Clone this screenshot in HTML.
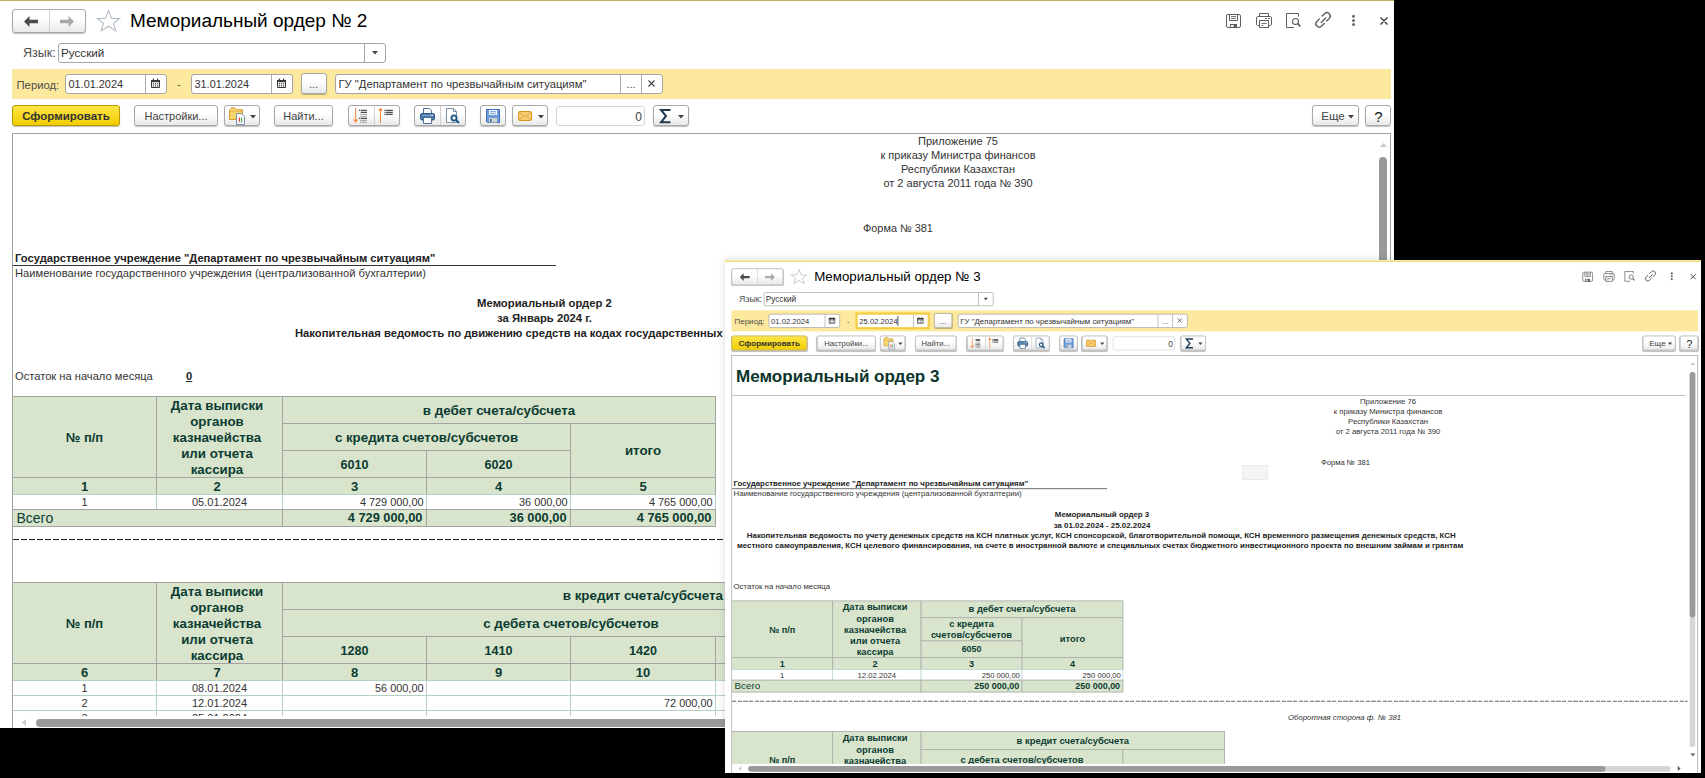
<!DOCTYPE html><html><head><meta charset="utf-8"><style>
*{margin:0;padding:0;box-sizing:border-box}
html,body{width:1705px;height:778px;overflow:hidden;background:#000}
body{position:relative;font-family:"Liberation Sans", sans-serif}
.win{position:absolute;width:1394px;height:728px;background:#fff;overflow:hidden}
.b,.t,.btn,.inp{position:absolute}
.t{line-height:0;white-space:nowrap}
.btn{border:1px solid #a8a8a8;border-radius:3px;background:linear-gradient(#fff 40%,#e9e9e9);box-shadow:0 1px 1px rgba(0,0,0,.25)}
.ybtn{border-color:#b89a00;background:linear-gradient(#fde648,#f2cd00)}
.inp{border:1px solid #a5a5a5;border-radius:3px;background:#fff}
svg.b{overflow:visible}
</style></head><body>
<div class="win" style="left:0;top:0">
<div class="b" style="left:0px;top:0px;width:1394px;height:1px;background:#c2b25a"></div>
<div class="btn" style="left:12px;top:9px;width:74px;height:24px;"></div>
<div class="b" style="left:49px;top:10px;width:1px;height:22px;background:#d0d0d0"></div>
<svg class="b" style="left:24px;top:16px" width="14" height="11" viewBox="0 0 14 11"><path d="M0 5.5L5.5 0V3.8H14V7.2H5.5V11Z" fill="#4a4a4a"/></svg>
<svg class="b" style="left:60px;top:16px" width="14" height="11" viewBox="0 0 14 11"><path d="M14 5.5L8.5 0V3.8H0V7.2H8.5V11Z" fill="#a9a9a9"/></svg>
<svg class="b" style="left:90px;top:5px" width="35" height="32" viewBox="0 0 35 32"><path d="M18.5 5.6L21.7 13.4H29.7L23.5 18.4L25.8 25.9L18.5 21.2L11.2 25.9L13.5 18.4L7.3 13.4H15.3Z" fill="none" stroke="#b2bac4" stroke-width="1.05" stroke-linejoin="miter"/></svg>
<div class="t" style="left:130px;top:21.42px;font-size:19px;color:#000;">Мемориальный ордер № 2</div>
<svg class="b" style="left:1222px;top:9px" width="84" height="24" viewBox="0 0 84 24"><g fill="none" stroke="#5f5f5f" stroke-width="1"><rect x="4.5" y="5.5" width="14" height="13" rx="1.5"/><path d="M7.5 5.5V11.5H15.5V5.5"/><path d="M9 7.5H14M9 9.5H14" stroke-width="0.9"/><rect x="8.5" y="15.5" width="6" height="3"/><path d="M37.5 7.5V4.5H46.5V7.5"/><path d="M37.5 16.5H35.5A1.5 1.5 0 0 1 34.5 15V9A1.5 1.5 0 0 1 35.5 7.5H48.5A1.5 1.5 0 0 1 49.5 9V15A1.5 1.5 0 0 1 48.5 16.5H46.5"/><rect x="37.5" y="11.5" width="9" height="7"/><path d="M39.5 14.5H44.5M39.5 16.5H41.5M43 9.5H45M46 9.5H48" stroke-width="0.9"/><path d="M72 18.5H64.5V4.5H76.5V7.5"/><circle cx="73.5" cy="12.5" r="3" stroke-width="1.1"/><path d="M75.7 14.7L78.3 17.3" stroke-width="1.7"/></g><rect x="11.5" y="15.5" width="3" height="3" fill="#5f5f5f"/></svg>
<svg class="b" style="left:1312px;top:9px" width="24" height="24" viewBox="0 0 24 24"><path d="M7.3 10L4.9 12.4A3.3 3.3 0 0 0 9.6 17.1L12.3 14.4M10.2 7.1L12.6 4.7A3.3 3.3 0 0 1 17.3 9.4L14.6 12.1M9.2 13.6L13.7 9.1" fill="none" stroke="#5f5f5f" stroke-width="1.4" stroke-linecap="round"/></svg>
<svg class="b" style="left:1350px;top:13px" width="7" height="14" viewBox="0 0 7 14"><circle cx="3.5" cy="3.3" r="1.5" fill="#6a6a6a"/><circle cx="3.5" cy="7.4" r="1.5" fill="#6a6a6a"/><circle cx="3.5" cy="11.5" r="1.5" fill="#6a6a6a"/></svg>
<svg class="b" style="left:1379.5px;top:16.5px" width="8" height="8" viewBox="0 0 8 8"><path d="M0.8 0.8L7.2 7.2M7.2 0.8L0.8 7.2" stroke="#333" stroke-width="1.25" stroke-linecap="round"/></svg>
<div class="t" style="left:23px;top:52.67px;font-size:12.5px;color:#4d4d4d;">Язык:</div>
<div class="inp" style="left:58px;top:43px;width:328px;height:20px;"></div>
<div class="b" style="left:364px;top:44px;width:1px;height:18px;background:#a5a5a5"></div>
<svg class="b" style="left:371.5px;top:51.0px" width="6" height="3.5" viewBox="0 0 6 3.5"><path d="M0 0H6L3 3.5Z" fill="#444"/></svg>
<div class="t" style="left:61px;top:52.95px;font-size:11.7px;color:#333;">Русский</div>
<div class="b" style="left:12px;top:69px;width:1379px;height:30px;background:#fce99d"></div>
<div class="t" style="left:16.5px;top:85.08px;font-size:11.3px;color:#4d4d4d;">Период:</div>
<div class="inp" style="left:65px;top:74px;width:102px;height:20px;"></div>
<div class="b" style="left:145px;top:75px;width:1px;height:18px;background:#a8a8a8"></div>
<svg class="b" style="left:151px;top:78px" width="9" height="10" viewBox="0 0 9 10"><path d="M0.5 2.5H8.5V9.5H0.5Z" fill="none" stroke="#3a3a3a"/><rect x="0" y="2" width="9" height="2.2" fill="#3a3a3a"/><rect x="1.8" y="0.6" width="1.2" height="2" fill="#3a3a3a"/><rect x="6" y="0.6" width="1.2" height="2" fill="#3a3a3a"/><g fill="#3a3a3a"><rect x="1.8" y="5.2" width="1.2" height="1.2"/><rect x="3.9" y="5.2" width="1.2" height="1.2"/><rect x="6" y="5.2" width="1.2" height="1.2"/><rect x="1.8" y="7.3" width="1.2" height="1.2"/><rect x="3.9" y="7.3" width="1.2" height="1.2"/><rect x="6" y="7.3" width="1.2" height="1.2"/></g></svg>
<div class="t" style="left:68.5px;top:84.22px;font-size:10.9px;color:#333;">01.01.2024</div>
<div class="t" style="left:177px;top:83.69px;font-size:11px;color:#555;">-</div>
<div class="inp" style="left:191px;top:74px;width:102px;height:20px;"></div>
<div class="b" style="left:271px;top:75px;width:1px;height:18px;background:#a8a8a8"></div>
<svg class="b" style="left:277px;top:78px" width="9" height="10" viewBox="0 0 9 10"><path d="M0.5 2.5H8.5V9.5H0.5Z" fill="none" stroke="#3a3a3a"/><rect x="0" y="2" width="9" height="2.2" fill="#3a3a3a"/><rect x="1.8" y="0.6" width="1.2" height="2" fill="#3a3a3a"/><rect x="6" y="0.6" width="1.2" height="2" fill="#3a3a3a"/><g fill="#3a3a3a"><rect x="1.8" y="5.2" width="1.2" height="1.2"/><rect x="3.9" y="5.2" width="1.2" height="1.2"/><rect x="6" y="5.2" width="1.2" height="1.2"/><rect x="1.8" y="7.3" width="1.2" height="1.2"/><rect x="3.9" y="7.3" width="1.2" height="1.2"/><rect x="6" y="7.3" width="1.2" height="1.2"/></g></svg>
<div class="t" style="left:194.5px;top:84.22px;font-size:10.9px;color:#333;">31.01.2024</div>
<div class="btn" style="left:301px;top:73px;width:26px;height:21px;"><div class="t" style="left:0px;top:10.19px;font-size:11px;color:#444;left:7px">...</div>
</div>
<div class="inp" style="left:335px;top:74px;width:328px;height:20px;"></div>
<div class="b" style="left:620px;top:75px;width:1px;height:18px;background:#a8a8a8"></div>
<div class="b" style="left:641px;top:75px;width:1px;height:18px;background:#a8a8a8"></div>
<div class="t" style="left:338.5px;top:84.11px;font-size:11.24px;color:#333;">ГУ "Департамент по чрезвычайным ситуациям"</div>
<div class="t" style="left:-369px;width:2000px;text-align:center;top:83.69px;font-size:11px;color:#444;">...</div>
<svg class="b" style="left:648px;top:80px" width="7" height="7" viewBox="0 0 7 7"><path d="M0.5 0.5L6.5 6.5M6.5 0.5L0.5 6.5" stroke="#444" stroke-width="1.1"/></svg>
<div class="btn ybtn" style="left:12px;top:105px;width:108px;height:21px;"></div>
<div class="t" style="left:-934px;width:2000px;text-align:center;top:116.02px;font-size:11.5px;font-weight:bold;color:#333;">Сформировать</div>
<div class="btn" style="left:134px;top:105px;width:84px;height:21px;"></div>
<div class="t" style="left:-824px;width:2000px;text-align:center;top:116.19px;font-size:11px;color:#444;">Настройки...</div>
<div class="btn" style="left:224px;top:105px;width:36px;height:21px;"></div>
<svg class="b" style="left:229px;top:107px" width="17" height="18" viewBox="0 0 17 18"><path d="M0.5 3L2.8 0.8H5.6L7.3 2.7H13.5V12.5H0.5Z" fill="#f7d66e" stroke="#d39a35"/><path d="M0.5 4.5H13.5" stroke="#e6b04a" stroke-width="0.8"/><path d="M7.5 6.5H12.5L15.5 9.5V17.5H7.5Z" fill="#fff" stroke="#7890a5"/><rect x="9.8" y="10.5" width="1.2" height="4" fill="#e83a3a"/><rect x="12" y="10.5" width="1.2" height="4" fill="#3cb44a"/><path d="M9 15H14" stroke="#8a8a8a" stroke-width="0.6"/></svg>
<svg class="b" style="left:249.5px;top:114.5px" width="6" height="3.5" viewBox="0 0 6 3.5"><path d="M0 0H6L3 3.5Z" fill="#444"/></svg>
<div class="btn" style="left:274px;top:105px;width:59px;height:21px;"></div>
<div class="t" style="left:-696.5px;width:2000px;text-align:center;top:116.19px;font-size:11px;color:#444;">Найти...</div>
<div class="btn" style="left:348px;top:105px;width:52px;height:21px;"></div>
<div class="b" style="left:374px;top:106px;width:1px;height:19px;background:#d0d0d0"></div>
<svg class="b" style="left:353px;top:107px" width="16" height="17" viewBox="0 0 16 17"><path d="M2.6 1V15" stroke="#f28a4a" stroke-width="1.1"/><path d="M0 12.5L2.6 16L5.2 12.5Z" fill="#f28a4a"/><g fill="#222"><rect x="6" y="2.8" width="1" height="1"/><rect x="7.6" y="2.8" width="6.4" height="1"/><rect x="7.6" y="4.8" width="6.4" height="1"/><rect x="6" y="10.8" width="1" height="1"/><rect x="7.6" y="10.8" width="6.4" height="1"/></g><g fill="#9a9a9a"><rect x="7" y="6.8" width="1" height="1"/><rect x="8.4" y="6.8" width="5.6" height="1"/><rect x="7" y="8.8" width="1" height="1"/><rect x="8.4" y="8.8" width="5.6" height="1"/><rect x="7" y="12.8" width="1" height="1"/><rect x="8.4" y="12.8" width="5.6" height="1"/><rect x="7" y="14.8" width="1" height="1"/><rect x="8.4" y="14.8" width="5.6" height="1"/></g></svg>
<svg class="b" style="left:378px;top:107px" width="16" height="17" viewBox="0 0 16 17"><path d="M2.5 3V16" stroke="#f28a4a" stroke-width="1.1"/><path d="M0 3.8L2.5 0.5L5 3.8Z" fill="#f28a4a"/><g fill="#222"><rect x="6.3" y="2.8" width="1" height="1"/><rect x="7.8" y="2.8" width="7" height="1"/><rect x="6.3" y="4.8" width="1" height="1"/><rect x="7.8" y="4.8" width="7" height="1"/><rect x="6.3" y="6.8" width="1" height="1"/><rect x="7.8" y="6.8" width="7" height="1"/></g></svg>
<div class="btn" style="left:414px;top:105px;width:52px;height:21px;"></div>
<div class="b" style="left:440px;top:106px;width:1px;height:19px;background:#d0d0d0"></div>
<svg class="b" style="left:420px;top:108px" width="15" height="16" viewBox="0 0 15 16"><path d="M3.5 6V0.5H9.5L11.5 2.5V6" fill="#fff" stroke="#4d6f92"/><rect x="0.5" y="5.5" width="14" height="6.5" rx="1.5" fill="#4a78a6" stroke="#2d5a86"/><path d="M2 7.5H13" stroke="#8fb0d0" stroke-width="0.8"/><rect x="10.5" y="6.6" width="1" height="1" fill="#fff"/><rect x="12" y="6.6" width="1" height="1" fill="#fff"/><path d="M3.5 9.5H11.5V15.5H3.5Z" fill="#fff" stroke="#4d6f92"/></svg>
<svg class="b" style="left:446px;top:108px" width="15" height="16" viewBox="0 0 15 16"><path d="M0.5 0.5H7.5L10.5 3.5V14.5H0.5Z" fill="#fff" stroke="#7890a8"/><path d="M7.5 0.5V3.5H10.5" fill="none" stroke="#7890a8"/><circle cx="8" cy="10" r="2.6" fill="none" stroke="#1d5480" stroke-width="1.8"/><path d="M9.8 11.8L13 15" stroke="#1d5480" stroke-width="2"/></svg>
<div class="btn" style="left:480px;top:105px;width:26px;height:21px;"></div>
<svg class="b" style="left:486px;top:109px" width="14" height="14" viewBox="0 0 14 14"><path d="M0.5 0.5H13.5V13.5H1.5L0.5 12.5Z" fill="#6d9ddb" stroke="#3f6fb0"/><rect x="3" y="1" width="8" height="4.8" fill="#fff"/><path d="M4 2.6H10M4 4.3H10" stroke="#5a88c8" stroke-width="0.8"/><rect x="3" y="9" width="8" height="4.5" fill="#cfd6d0"/><rect x="4" y="10" width="1.6" height="3" fill="#3f6fb0"/></svg>
<div class="btn" style="left:512px;top:105px;width:36px;height:21px;"></div>
<svg class="b" style="left:518px;top:111px" width="14" height="10" viewBox="0 0 14 10"><rect x="0.5" y="0.5" width="13" height="9" rx="1" fill="#f8cd70" stroke="#d8921e"/><path d="M1 1L7 6L13 1M1 9L5.3 4.8M13 9L8.7 4.8" fill="none" stroke="#dc9a36" stroke-width="0.8"/></svg>
<svg class="b" style="left:537.5px;top:114.5px" width="6" height="3.5" viewBox="0 0 6 3.5"><path d="M0 0H6L3 3.5Z" fill="#444"/></svg>
<div class="inp" style="left:556px;top:106px;width:89px;height:20px;border-color:#d5d5d5"></div>
<div class="t" style="left:-1358px;width:2000px;text-align:right;top:116.84px;font-size:12px;color:#444;">0</div>
<div class="btn" style="left:653px;top:105px;width:36px;height:21px;"></div>
<svg class="b" style="left:659px;top:108px" width="13" height="16" viewBox="0 0 13 16"><path d="M11.5 1.9H2L7 8.1L2 14.3H11.5" fill="none" stroke="#1f3a50" stroke-width="2" stroke-linejoin="miter"/></svg>
<svg class="b" style="left:677.5px;top:114.5px" width="6" height="3.5" viewBox="0 0 6 3.5"><path d="M0 0H6L3 3.5Z" fill="#444"/></svg>
<div class="btn" style="left:1312px;top:105px;width:47px;height:21px;"></div>
<div class="t" style="left:333px;width:2000px;text-align:center;top:116.02px;font-size:11.5px;color:#444;">Еще</div>
<svg class="b" style="left:1347.5px;top:114.5px" width="6" height="3.5" viewBox="0 0 6 3.5"><path d="M0 0H6L3 3.5Z" fill="#444"/></svg>
<div class="btn" style="left:1365px;top:105px;width:26px;height:21px;"></div>
<div class="t" style="left:378.5px;width:2000px;text-align:center;top:116.80px;font-size:15px;color:#111;">?</div>
<div class="b" style="left:12px;top:133px;width:1379px;height:600px;border:1px solid #a0a0a0;background:#fff"></div>
<div class="b" style="left:13px;top:134px;width:1377px;height:582px;overflow:hidden"><div class="b" style="left:-13px;top:-134px;width:1394px;height:728px"><div class="t" style="left:-42px;width:2000px;text-align:center;top:141.19px;font-size:11px;color:#333;">Приложение 75</div>
<div class="t" style="left:-42px;width:2000px;text-align:center;top:155.19px;font-size:11px;color:#333;">к приказу Министра финансов</div>
<div class="t" style="left:-42px;width:2000px;text-align:center;top:169.19px;font-size:11px;color:#333;">Республики Казахстан</div>
<div class="t" style="left:-42px;width:2000px;text-align:center;top:183.19px;font-size:11px;color:#333;">от 2 августа 2011 года № 390</div>
<div class="t" style="left:863px;top:227.72px;font-size:10.9px;color:#333;">Форма № 381</div>
<div class="t" style="left:15px;top:258.12px;font-size:11.2px;font-weight:bold;color:#222;">Государственное учреждение "Департамент по чрезвычайным ситуациям"</div>
<div class="b" style="left:12px;top:265px;width:544px;height:1px;background:#333"></div>
<div class="t" style="left:15px;top:273.13px;font-size:11.16px;color:#333;">Наименование государственного учреждения (централизованной бухгалтерии)</div>
<div class="t" style="left:-455.5px;width:2000px;text-align:center;top:302.58px;font-size:11.3px;font-weight:bold;color:#222;">Мемориальный ордер 2</div>
<div class="t" style="left:-455.5px;width:2000px;text-align:center;top:317.58px;font-size:11.3px;font-weight:bold;color:#222;">за Январь 2024 г.</div>
<div class="t" style="left:295px;top:332.61px;font-size:11.24px;font-weight:bold;color:#222;">Накопительная ведомость по движению средств на кодах государственных учреждений</div>
<div class="t" style="left:15px;top:376.14px;font-size:11.15px;color:#333;">Остаток на начало месяца</div>
<div class="t" style="left:186px;top:376.12px;font-size:11.2px;font-weight:bold;color:#222;text-decoration:underline">0</div>
<div class="b" style="left:12px;top:396px;width:145px;height:99px;background:#d8e4cc;border:1px solid #a3a3a3"></div>
<div class="b" style="left:156px;top:396px;width:127px;height:99px;background:#d8e4cc;border:1px solid #a3a3a3"></div>
<div class="b" style="left:282px;top:396px;width:434px;height:28px;background:#d8e4cc;border:1px solid #a3a3a3"></div>
<div class="b" style="left:282px;top:423px;width:289px;height:28px;background:#d8e4cc;border:1px solid #a3a3a3"></div>
<div class="b" style="left:570px;top:423px;width:146px;height:55px;background:#d8e4cc;border:1px solid #a3a3a3"></div>
<div class="b" style="left:282px;top:450px;width:145px;height:28px;background:#d8e4cc;border:1px solid #a3a3a3"></div>
<div class="b" style="left:426px;top:450px;width:145px;height:28px;background:#d8e4cc;border:1px solid #a3a3a3"></div>
<div class="b" style="left:12px;top:477px;width:145px;height:18px;background:#d8e4cc;border:1px solid #a3a3a3"></div>
<div class="b" style="left:156px;top:477px;width:127px;height:18px;background:#d8e4cc;border:1px solid #a3a3a3"></div>
<div class="b" style="left:282px;top:477px;width:145px;height:18px;background:#d8e4cc;border:1px solid #a3a3a3"></div>
<div class="b" style="left:426px;top:477px;width:145px;height:18px;background:#d8e4cc;border:1px solid #a3a3a3"></div>
<div class="b" style="left:570px;top:477px;width:146px;height:18px;background:#d8e4cc;border:1px solid #a3a3a3"></div>
<div class="b" style="left:12px;top:494px;width:145px;height:16px;background:#fff;border:1px solid #b5d0c5"></div>
<div class="b" style="left:156px;top:494px;width:127px;height:16px;background:#fff;border:1px solid #b5d0c5"></div>
<div class="b" style="left:282px;top:494px;width:145px;height:16px;background:#fff;border:1px solid #b5d0c5"></div>
<div class="b" style="left:426px;top:494px;width:145px;height:16px;background:#fff;border:1px solid #b5d0c5"></div>
<div class="b" style="left:570px;top:494px;width:146px;height:16px;background:#fff;border:1px solid #b5d0c5"></div>
<div class="b" style="left:12px;top:509px;width:271px;height:18px;background:#d8e4cc;border:1px solid #a3a3a3"></div>
<div class="b" style="left:282px;top:509px;width:145px;height:18px;background:#d8e4cc;border:1px solid #a3a3a3"></div>
<div class="b" style="left:426px;top:509px;width:145px;height:18px;background:#d8e4cc;border:1px solid #a3a3a3"></div>
<div class="b" style="left:570px;top:509px;width:146px;height:18px;background:#d8e4cc;border:1px solid #a3a3a3"></div>
<div class="t" style="left:-915.5px;width:2000px;text-align:center;top:438.30px;font-size:13px;font-weight:bold;color:#0c3c32;">№ п/п</div>
<div class="t" style="left:-783.0px;width:2000px;text-align:center;top:406.19px;font-size:13.3px;font-weight:bold;color:#0c3c32;">Дата выписки</div>
<div class="t" style="left:-783.0px;width:2000px;text-align:center;top:422.19px;font-size:13.3px;font-weight:bold;color:#0c3c32;">органов</div>
<div class="t" style="left:-783.0px;width:2000px;text-align:center;top:438.19px;font-size:13.3px;font-weight:bold;color:#0c3c32;">казначейства</div>
<div class="t" style="left:-783.0px;width:2000px;text-align:center;top:454.19px;font-size:13.3px;font-weight:bold;color:#0c3c32;">или отчета</div>
<div class="t" style="left:-783.0px;width:2000px;text-align:center;top:470.19px;font-size:13.3px;font-weight:bold;color:#0c3c32;">кассира</div>
<div class="t" style="left:-501.0px;width:2000px;text-align:center;top:411.16px;font-size:13.4px;font-weight:bold;color:#0c3c32;">в дебет счета/субсчета</div>
<div class="t" style="left:-573.5px;width:2000px;text-align:center;top:438.19px;font-size:13.3px;font-weight:bold;color:#0c3c32;">с кредита счетов/субсчетов</div>
<div class="t" style="left:-357.0px;width:2000px;text-align:center;top:451.19px;font-size:13.3px;font-weight:bold;color:#0c3c32;">итого</div>
<div class="t" style="left:-645.5px;width:2000px;text-align:center;top:465.43px;font-size:12.6px;font-weight:bold;color:#0c3c32;">6010</div>
<div class="t" style="left:-501.5px;width:2000px;text-align:center;top:465.43px;font-size:12.6px;font-weight:bold;color:#0c3c32;">6020</div>
<div class="t" style="left:-915.5px;width:2000px;text-align:center;top:486.90px;font-size:13px;font-weight:bold;color:#0c3c32;">1</div>
<div class="t" style="left:-783.0px;width:2000px;text-align:center;top:486.90px;font-size:13px;font-weight:bold;color:#0c3c32;">2</div>
<div class="t" style="left:-645.5px;width:2000px;text-align:center;top:486.90px;font-size:13px;font-weight:bold;color:#0c3c32;">3</div>
<div class="t" style="left:-501.5px;width:2000px;text-align:center;top:486.90px;font-size:13px;font-weight:bold;color:#0c3c32;">4</div>
<div class="t" style="left:-357.0px;width:2000px;text-align:center;top:486.90px;font-size:13px;font-weight:bold;color:#0c3c32;">5</div>
<div class="t" style="left:-915.5px;width:2000px;text-align:center;top:502.19px;font-size:11px;color:#333;">1</div>
<div class="t" style="left:-780.5px;width:2000px;text-align:center;top:502.19px;font-size:11px;color:#333;">05.01.2024</div>
<div class="t" style="left:-1576.5px;width:2000px;text-align:right;top:502.22px;font-size:10.9px;color:#333;">4 729 000,00</div>
<div class="t" style="left:-1432.5px;width:2000px;text-align:right;top:502.22px;font-size:10.9px;color:#333;">36 000,00</div>
<div class="t" style="left:-1287.5px;width:2000px;text-align:right;top:502.22px;font-size:10.9px;color:#333;">4 765 000,00</div>
<div class="t" style="left:16.5px;top:518.15px;font-size:14px;color:#0c3c32;">Всего</div>
<div class="t" style="left:-1577.5px;width:2000px;text-align:right;top:518.16px;font-size:12.8px;font-weight:bold;color:#0c3c32;">4 729 000,00</div>
<div class="t" style="left:-1433.5px;width:2000px;text-align:right;top:518.16px;font-size:12.8px;font-weight:bold;color:#0c3c32;">36 000,00</div>
<div class="t" style="left:-1288.5px;width:2000px;text-align:right;top:518.16px;font-size:12.8px;font-weight:bold;color:#0c3c32;">4 765 000,00</div>
<div class="b" style="left:13px;top:539px;width:1362px;height:1px;background:repeating-linear-gradient(90deg,#222 0 6px,transparent 6px 8px)"></div>
<div class="b" style="left:12px;top:582px;width:145px;height:99px;background:#d8e4cc;border:1px solid #a3a3a3"></div>
<div class="b" style="left:156px;top:582px;width:127px;height:99px;background:#d8e4cc;border:1px solid #a3a3a3"></div>
<div class="b" style="left:282px;top:582px;width:722px;height:28px;background:#d8e4cc;border:1px solid #a3a3a3"></div>
<div class="b" style="left:282px;top:609px;width:578px;height:28px;background:#d8e4cc;border:1px solid #a3a3a3"></div>
<div class="b" style="left:859px;top:609px;width:145px;height:55px;background:#d8e4cc;border:1px solid #a3a3a3"></div>
<div class="b" style="left:282px;top:636px;width:145px;height:28px;background:#d8e4cc;border:1px solid #a3a3a3"></div>
<div class="b" style="left:426px;top:636px;width:145px;height:28px;background:#d8e4cc;border:1px solid #a3a3a3"></div>
<div class="b" style="left:570px;top:636px;width:146px;height:28px;background:#d8e4cc;border:1px solid #a3a3a3"></div>
<div class="b" style="left:715px;top:636px;width:145px;height:28px;background:#d8e4cc;border:1px solid #a3a3a3"></div>
<div class="b" style="left:12px;top:663px;width:145px;height:18px;background:#d8e4cc;border:1px solid #a3a3a3"></div>
<div class="b" style="left:156px;top:663px;width:127px;height:18px;background:#d8e4cc;border:1px solid #a3a3a3"></div>
<div class="b" style="left:282px;top:663px;width:145px;height:18px;background:#d8e4cc;border:1px solid #a3a3a3"></div>
<div class="b" style="left:426px;top:663px;width:145px;height:18px;background:#d8e4cc;border:1px solid #a3a3a3"></div>
<div class="b" style="left:570px;top:663px;width:146px;height:18px;background:#d8e4cc;border:1px solid #a3a3a3"></div>
<div class="b" style="left:715px;top:663px;width:145px;height:18px;background:#d8e4cc;border:1px solid #a3a3a3"></div>
<div class="b" style="left:859px;top:663px;width:145px;height:18px;background:#d8e4cc;border:1px solid #a3a3a3"></div>
<div class="b" style="left:12px;top:680px;width:145px;height:16px;background:#fff;border:1px solid #b5d0c5"></div>
<div class="b" style="left:156px;top:680px;width:127px;height:16px;background:#fff;border:1px solid #b5d0c5"></div>
<div class="b" style="left:282px;top:680px;width:145px;height:16px;background:#fff;border:1px solid #b5d0c5"></div>
<div class="b" style="left:426px;top:680px;width:145px;height:16px;background:#fff;border:1px solid #b5d0c5"></div>
<div class="b" style="left:570px;top:680px;width:146px;height:16px;background:#fff;border:1px solid #b5d0c5"></div>
<div class="b" style="left:715px;top:680px;width:145px;height:16px;background:#fff;border:1px solid #b5d0c5"></div>
<div class="b" style="left:859px;top:680px;width:145px;height:16px;background:#fff;border:1px solid #b5d0c5"></div>
<div class="b" style="left:12px;top:695px;width:145px;height:16px;background:#fff;border:1px solid #b5d0c5"></div>
<div class="b" style="left:156px;top:695px;width:127px;height:16px;background:#fff;border:1px solid #b5d0c5"></div>
<div class="b" style="left:282px;top:695px;width:145px;height:16px;background:#fff;border:1px solid #b5d0c5"></div>
<div class="b" style="left:426px;top:695px;width:145px;height:16px;background:#fff;border:1px solid #b5d0c5"></div>
<div class="b" style="left:570px;top:695px;width:146px;height:16px;background:#fff;border:1px solid #b5d0c5"></div>
<div class="b" style="left:715px;top:695px;width:145px;height:16px;background:#fff;border:1px solid #b5d0c5"></div>
<div class="b" style="left:859px;top:695px;width:145px;height:16px;background:#fff;border:1px solid #b5d0c5"></div>
<div class="b" style="left:12px;top:710px;width:145px;height:16px;background:#fff;border:1px solid #b5d0c5"></div>
<div class="b" style="left:156px;top:710px;width:127px;height:16px;background:#fff;border:1px solid #b5d0c5"></div>
<div class="b" style="left:282px;top:710px;width:145px;height:16px;background:#fff;border:1px solid #b5d0c5"></div>
<div class="b" style="left:426px;top:710px;width:145px;height:16px;background:#fff;border:1px solid #b5d0c5"></div>
<div class="b" style="left:570px;top:710px;width:146px;height:16px;background:#fff;border:1px solid #b5d0c5"></div>
<div class="b" style="left:715px;top:710px;width:145px;height:16px;background:#fff;border:1px solid #b5d0c5"></div>
<div class="b" style="left:859px;top:710px;width:145px;height:16px;background:#fff;border:1px solid #b5d0c5"></div>
<div class="t" style="left:-915.5px;width:2000px;text-align:center;top:624.30px;font-size:13px;font-weight:bold;color:#0c3c32;">№ п/п</div>
<div class="t" style="left:-783.0px;width:2000px;text-align:center;top:592.19px;font-size:13.3px;font-weight:bold;color:#0c3c32;">Дата выписки</div>
<div class="t" style="left:-783.0px;width:2000px;text-align:center;top:608.19px;font-size:13.3px;font-weight:bold;color:#0c3c32;">органов</div>
<div class="t" style="left:-783.0px;width:2000px;text-align:center;top:624.19px;font-size:13.3px;font-weight:bold;color:#0c3c32;">казначейства</div>
<div class="t" style="left:-783.0px;width:2000px;text-align:center;top:640.19px;font-size:13.3px;font-weight:bold;color:#0c3c32;">или отчета</div>
<div class="t" style="left:-783.0px;width:2000px;text-align:center;top:656.19px;font-size:13.3px;font-weight:bold;color:#0c3c32;">кассира</div>
<div class="t" style="left:562.7px;top:595.96px;font-size:13.4px;font-weight:bold;color:#0c3c32;">в кредит счета/субсчета</div>
<div class="t" style="left:-429.0px;width:2000px;text-align:center;top:623.79px;font-size:13.3px;font-weight:bold;color:#0c3c32;">с дебета счетов/субсчетов</div>
<div class="t" style="left:-645.5px;width:2000px;text-align:center;top:651.43px;font-size:12.6px;font-weight:bold;color:#0c3c32;">1280</div>
<div class="t" style="left:-501.5px;width:2000px;text-align:center;top:651.43px;font-size:12.6px;font-weight:bold;color:#0c3c32;">1410</div>
<div class="t" style="left:-357.0px;width:2000px;text-align:center;top:651.43px;font-size:12.6px;font-weight:bold;color:#0c3c32;">1420</div>
<div class="t" style="left:-212.5px;width:2000px;text-align:center;top:651.43px;font-size:12.6px;font-weight:bold;color:#0c3c32;">1430</div>
<div class="t" style="left:-915.5px;width:2000px;text-align:center;top:673.30px;font-size:13px;font-weight:bold;color:#0c3c32;">6</div>
<div class="t" style="left:-783.0px;width:2000px;text-align:center;top:673.30px;font-size:13px;font-weight:bold;color:#0c3c32;">7</div>
<div class="t" style="left:-645.5px;width:2000px;text-align:center;top:673.30px;font-size:13px;font-weight:bold;color:#0c3c32;">8</div>
<div class="t" style="left:-501.5px;width:2000px;text-align:center;top:673.30px;font-size:13px;font-weight:bold;color:#0c3c32;">9</div>
<div class="t" style="left:-357.0px;width:2000px;text-align:center;top:673.30px;font-size:13px;font-weight:bold;color:#0c3c32;">10</div>
<div class="t" style="left:-212.5px;width:2000px;text-align:center;top:673.30px;font-size:13px;font-weight:bold;color:#0c3c32;">11</div>
<div class="t" style="left:-68.5px;width:2000px;text-align:center;top:673.30px;font-size:13px;font-weight:bold;color:#0c3c32;">12</div>
<div class="t" style="left:-915.5px;width:2000px;text-align:center;top:687.69px;font-size:11px;color:#333;">1</div>
<div class="t" style="left:-780.5px;width:2000px;text-align:center;top:687.69px;font-size:11px;color:#333;">08.01.2024</div>
<div class="t" style="left:-915.5px;width:2000px;text-align:center;top:702.69px;font-size:11px;color:#333;">2</div>
<div class="t" style="left:-780.5px;width:2000px;text-align:center;top:702.69px;font-size:11px;color:#333;">12.01.2024</div>
<div class="t" style="left:-915.5px;width:2000px;text-align:center;top:717.69px;font-size:11px;color:#333;">3</div>
<div class="t" style="left:-780.5px;width:2000px;text-align:center;top:717.69px;font-size:11px;color:#333;">25.01.2024</div>
<div class="t" style="left:-1576.5px;width:2000px;text-align:right;top:687.72px;font-size:10.9px;color:#333;">56 000,00</div>
<div class="t" style="left:-1287.5px;width:2000px;text-align:right;top:702.82px;font-size:10.9px;color:#333;">72 000,00</div>
</div></div>
<svg class="b" style="left:1380px;top:143px" width="7" height="4" viewBox="0 0 7 4"><path d="M0 4L3.5 0L7 4Z" fill="#c8c8c8"/></svg>
<div class="b" style="left:1379px;top:157px;width:8px;height:543px;background:#9a9a9a;border-radius:4px"></div>
<svg class="b" style="left:22px;top:719px" width="4" height="7" viewBox="0 0 4 7"><path d="M4 0L0 3.5L4 7Z" fill="#c8c8c8"/></svg>
<div class="b" style="left:36px;top:719px;width:1264px;height:8px;background:#9a9a9a;border-radius:4px"></div>
</div>
<div class="b" style="left:725px;top:260px;width:976px;height:513px;background:#fff;box-shadow:0 0 6px 1px rgba(0,0,0,.12)"></div>
<div class="b" style="left:725px;top:260px;width:976px;height:513px;overflow:hidden">
<div class="win" style="left:-2px;top:1.5px;height:730px;background:transparent;transform:scale(0.701);transform-origin:0 0">
<div class="btn" style="left:12px;top:9px;width:74px;height:24px;"></div>
<div class="b" style="left:49px;top:10px;width:1px;height:22px;background:#d0d0d0"></div>
<svg class="b" style="left:24px;top:16px" width="14" height="11" viewBox="0 0 14 11"><path d="M0 5.5L5.5 0V3.8H14V7.2H5.5V11Z" fill="#4a4a4a"/></svg>
<svg class="b" style="left:60px;top:16px" width="14" height="11" viewBox="0 0 14 11"><path d="M14 5.5L8.5 0V3.8H0V7.2H8.5V11Z" fill="#a9a9a9"/></svg>
<svg class="b" style="left:90px;top:5px" width="35" height="32" viewBox="0 0 35 32"><path d="M18.5 5.6L21.7 13.4H29.7L23.5 18.4L25.8 25.9L18.5 21.2L11.2 25.9L13.5 18.4L7.3 13.4H15.3Z" fill="none" stroke="#b2bac4" stroke-width="1.05" stroke-linejoin="miter"/></svg>
<div class="t" style="left:130px;top:21.42px;font-size:19px;color:#000;">Мемориальный ордер № 3</div>
<svg class="b" style="left:1222px;top:9px" width="84" height="24" viewBox="0 0 84 24"><g fill="none" stroke="#5f5f5f" stroke-width="1"><rect x="4.5" y="5.5" width="14" height="13" rx="1.5"/><path d="M7.5 5.5V11.5H15.5V5.5"/><path d="M9 7.5H14M9 9.5H14" stroke-width="0.9"/><rect x="8.5" y="15.5" width="6" height="3"/><path d="M37.5 7.5V4.5H46.5V7.5"/><path d="M37.5 16.5H35.5A1.5 1.5 0 0 1 34.5 15V9A1.5 1.5 0 0 1 35.5 7.5H48.5A1.5 1.5 0 0 1 49.5 9V15A1.5 1.5 0 0 1 48.5 16.5H46.5"/><rect x="37.5" y="11.5" width="9" height="7"/><path d="M39.5 14.5H44.5M39.5 16.5H41.5M43 9.5H45M46 9.5H48" stroke-width="0.9"/><path d="M72 18.5H64.5V4.5H76.5V7.5"/><circle cx="73.5" cy="12.5" r="3" stroke-width="1.1"/><path d="M75.7 14.7L78.3 17.3" stroke-width="1.7"/></g><rect x="11.5" y="15.5" width="3" height="3" fill="#5f5f5f"/></svg>
<svg class="b" style="left:1312px;top:9px" width="24" height="24" viewBox="0 0 24 24"><path d="M7.3 10L4.9 12.4A3.3 3.3 0 0 0 9.6 17.1L12.3 14.4M10.2 7.1L12.6 4.7A3.3 3.3 0 0 1 17.3 9.4L14.6 12.1M9.2 13.6L13.7 9.1" fill="none" stroke="#5f5f5f" stroke-width="1.4" stroke-linecap="round"/></svg>
<svg class="b" style="left:1350px;top:13px" width="7" height="14" viewBox="0 0 7 14"><circle cx="3.5" cy="3.3" r="1.5" fill="#6a6a6a"/><circle cx="3.5" cy="7.4" r="1.5" fill="#6a6a6a"/><circle cx="3.5" cy="11.5" r="1.5" fill="#6a6a6a"/></svg>
<svg class="b" style="left:1379.5px;top:16.5px" width="8" height="8" viewBox="0 0 8 8"><path d="M0.8 0.8L7.2 7.2M7.2 0.8L0.8 7.2" stroke="#333" stroke-width="1.25" stroke-linecap="round"/></svg>
<div class="t" style="left:23px;top:52.67px;font-size:12.5px;color:#4d4d4d;">Язык:</div>
<div class="inp" style="left:58px;top:43px;width:328px;height:20px;"></div>
<div class="b" style="left:364px;top:44px;width:1px;height:18px;background:#a5a5a5"></div>
<svg class="b" style="left:371.5px;top:51.0px" width="6" height="3.5" viewBox="0 0 6 3.5"><path d="M0 0H6L3 3.5Z" fill="#444"/></svg>
<div class="t" style="left:61px;top:52.95px;font-size:11.7px;color:#333;">Русский</div>
<div class="b" style="left:12px;top:69px;width:1379px;height:30px;background:#fce99d"></div>
<div class="t" style="left:16.5px;top:85.08px;font-size:11.3px;color:#4d4d4d;">Период:</div>
<div class="inp" style="left:65px;top:74px;width:102px;height:20px;"></div>
<div class="b" style="left:145px;top:75px;width:1px;height:18px;background:#a8a8a8"></div>
<svg class="b" style="left:151px;top:78px" width="9" height="10" viewBox="0 0 9 10"><path d="M0.5 2.5H8.5V9.5H0.5Z" fill="none" stroke="#3a3a3a"/><rect x="0" y="2" width="9" height="2.2" fill="#3a3a3a"/><rect x="1.8" y="0.6" width="1.2" height="2" fill="#3a3a3a"/><rect x="6" y="0.6" width="1.2" height="2" fill="#3a3a3a"/><g fill="#3a3a3a"><rect x="1.8" y="5.2" width="1.2" height="1.2"/><rect x="3.9" y="5.2" width="1.2" height="1.2"/><rect x="6" y="5.2" width="1.2" height="1.2"/><rect x="1.8" y="7.3" width="1.2" height="1.2"/><rect x="3.9" y="7.3" width="1.2" height="1.2"/><rect x="6" y="7.3" width="1.2" height="1.2"/></g></svg>
<div class="t" style="left:68.5px;top:84.22px;font-size:10.9px;color:#333;">01.02.2024</div>
<div class="t" style="left:177px;top:83.69px;font-size:11px;color:#555;">-</div>
<div class="inp" style="left:191px;top:74px;width:102px;height:20px;border:1px solid #f0c020;border-radius:0;box-shadow:0 0 0 2px #f7c935;"></div>
<div class="b" style="left:271px;top:75px;width:1px;height:18px;background:#a8a8a8"></div>
<svg class="b" style="left:277px;top:78px" width="9" height="10" viewBox="0 0 9 10"><path d="M0.5 2.5H8.5V9.5H0.5Z" fill="none" stroke="#3a3a3a"/><rect x="0" y="2" width="9" height="2.2" fill="#3a3a3a"/><rect x="1.8" y="0.6" width="1.2" height="2" fill="#3a3a3a"/><rect x="6" y="0.6" width="1.2" height="2" fill="#3a3a3a"/><g fill="#3a3a3a"><rect x="1.8" y="5.2" width="1.2" height="1.2"/><rect x="3.9" y="5.2" width="1.2" height="1.2"/><rect x="6" y="5.2" width="1.2" height="1.2"/><rect x="1.8" y="7.3" width="1.2" height="1.2"/><rect x="3.9" y="7.3" width="1.2" height="1.2"/><rect x="6" y="7.3" width="1.2" height="1.2"/></g></svg>
<div class="t" style="left:194.5px;top:84.22px;font-size:10.9px;color:#333;">25.02.2024</div>
<div class="b" style="left:249px;top:77px;width:1px;height:14px;background:#000"></div>
<div class="btn" style="left:301px;top:73px;width:26px;height:21px;"><div class="t" style="left:0px;top:10.19px;font-size:11px;color:#444;left:7px">...</div>
</div>
<div class="inp" style="left:335px;top:74px;width:328px;height:20px;"></div>
<div class="b" style="left:620px;top:75px;width:1px;height:18px;background:#a8a8a8"></div>
<div class="b" style="left:641px;top:75px;width:1px;height:18px;background:#a8a8a8"></div>
<div class="t" style="left:338.5px;top:84.11px;font-size:11.24px;color:#333;">ГУ "Департамент по чрезвычайным ситуациям"</div>
<div class="t" style="left:-369px;width:2000px;text-align:center;top:83.69px;font-size:11px;color:#444;">...</div>
<svg class="b" style="left:648px;top:80px" width="7" height="7" viewBox="0 0 7 7"><path d="M0.5 0.5L6.5 6.5M6.5 0.5L0.5 6.5" stroke="#444" stroke-width="1.1"/></svg>
<div class="btn ybtn" style="left:12px;top:105px;width:108px;height:21px;"></div>
<div class="t" style="left:-934px;width:2000px;text-align:center;top:116.02px;font-size:11.5px;font-weight:bold;color:#333;">Сформировать</div>
<div class="btn" style="left:134px;top:105px;width:84px;height:21px;"></div>
<div class="t" style="left:-824px;width:2000px;text-align:center;top:116.19px;font-size:11px;color:#444;">Настройки...</div>
<div class="btn" style="left:224px;top:105px;width:36px;height:21px;"></div>
<svg class="b" style="left:229px;top:107px" width="17" height="18" viewBox="0 0 17 18"><path d="M0.5 3L2.8 0.8H5.6L7.3 2.7H13.5V12.5H0.5Z" fill="#f7d66e" stroke="#d39a35"/><path d="M0.5 4.5H13.5" stroke="#e6b04a" stroke-width="0.8"/><path d="M7.5 6.5H12.5L15.5 9.5V17.5H7.5Z" fill="#fff" stroke="#7890a5"/><rect x="9.8" y="10.5" width="1.2" height="4" fill="#e83a3a"/><rect x="12" y="10.5" width="1.2" height="4" fill="#3cb44a"/><path d="M9 15H14" stroke="#8a8a8a" stroke-width="0.6"/></svg>
<svg class="b" style="left:249.5px;top:114.5px" width="6" height="3.5" viewBox="0 0 6 3.5"><path d="M0 0H6L3 3.5Z" fill="#444"/></svg>
<div class="btn" style="left:274px;top:105px;width:59px;height:21px;"></div>
<div class="t" style="left:-696.5px;width:2000px;text-align:center;top:116.19px;font-size:11px;color:#444;">Найти...</div>
<div class="btn" style="left:348px;top:105px;width:52px;height:21px;"></div>
<div class="b" style="left:374px;top:106px;width:1px;height:19px;background:#d0d0d0"></div>
<svg class="b" style="left:353px;top:107px" width="16" height="17" viewBox="0 0 16 17"><path d="M2.6 1V15" stroke="#f28a4a" stroke-width="1.1"/><path d="M0 12.5L2.6 16L5.2 12.5Z" fill="#f28a4a"/><g fill="#222"><rect x="6" y="2.8" width="1" height="1"/><rect x="7.6" y="2.8" width="6.4" height="1"/><rect x="7.6" y="4.8" width="6.4" height="1"/><rect x="6" y="10.8" width="1" height="1"/><rect x="7.6" y="10.8" width="6.4" height="1"/></g><g fill="#9a9a9a"><rect x="7" y="6.8" width="1" height="1"/><rect x="8.4" y="6.8" width="5.6" height="1"/><rect x="7" y="8.8" width="1" height="1"/><rect x="8.4" y="8.8" width="5.6" height="1"/><rect x="7" y="12.8" width="1" height="1"/><rect x="8.4" y="12.8" width="5.6" height="1"/><rect x="7" y="14.8" width="1" height="1"/><rect x="8.4" y="14.8" width="5.6" height="1"/></g></svg>
<svg class="b" style="left:378px;top:107px" width="16" height="17" viewBox="0 0 16 17"><path d="M2.5 3V16" stroke="#f28a4a" stroke-width="1.1"/><path d="M0 3.8L2.5 0.5L5 3.8Z" fill="#f28a4a"/><g fill="#222"><rect x="6.3" y="2.8" width="1" height="1"/><rect x="7.8" y="2.8" width="7" height="1"/><rect x="6.3" y="4.8" width="1" height="1"/><rect x="7.8" y="4.8" width="7" height="1"/><rect x="6.3" y="6.8" width="1" height="1"/><rect x="7.8" y="6.8" width="7" height="1"/></g></svg>
<div class="btn" style="left:414px;top:105px;width:52px;height:21px;"></div>
<div class="b" style="left:440px;top:106px;width:1px;height:19px;background:#d0d0d0"></div>
<svg class="b" style="left:420px;top:108px" width="15" height="16" viewBox="0 0 15 16"><path d="M3.5 6V0.5H9.5L11.5 2.5V6" fill="#fff" stroke="#4d6f92"/><rect x="0.5" y="5.5" width="14" height="6.5" rx="1.5" fill="#4a78a6" stroke="#2d5a86"/><path d="M2 7.5H13" stroke="#8fb0d0" stroke-width="0.8"/><rect x="10.5" y="6.6" width="1" height="1" fill="#fff"/><rect x="12" y="6.6" width="1" height="1" fill="#fff"/><path d="M3.5 9.5H11.5V15.5H3.5Z" fill="#fff" stroke="#4d6f92"/></svg>
<svg class="b" style="left:446px;top:108px" width="15" height="16" viewBox="0 0 15 16"><path d="M0.5 0.5H7.5L10.5 3.5V14.5H0.5Z" fill="#fff" stroke="#7890a8"/><path d="M7.5 0.5V3.5H10.5" fill="none" stroke="#7890a8"/><circle cx="8" cy="10" r="2.6" fill="none" stroke="#1d5480" stroke-width="1.8"/><path d="M9.8 11.8L13 15" stroke="#1d5480" stroke-width="2"/></svg>
<div class="btn" style="left:480px;top:105px;width:26px;height:21px;"></div>
<svg class="b" style="left:486px;top:109px" width="14" height="14" viewBox="0 0 14 14"><path d="M0.5 0.5H13.5V13.5H1.5L0.5 12.5Z" fill="#6d9ddb" stroke="#3f6fb0"/><rect x="3" y="1" width="8" height="4.8" fill="#fff"/><path d="M4 2.6H10M4 4.3H10" stroke="#5a88c8" stroke-width="0.8"/><rect x="3" y="9" width="8" height="4.5" fill="#cfd6d0"/><rect x="4" y="10" width="1.6" height="3" fill="#3f6fb0"/></svg>
<div class="btn" style="left:512px;top:105px;width:36px;height:21px;"></div>
<svg class="b" style="left:518px;top:111px" width="14" height="10" viewBox="0 0 14 10"><rect x="0.5" y="0.5" width="13" height="9" rx="1" fill="#f8cd70" stroke="#d8921e"/><path d="M1 1L7 6L13 1M1 9L5.3 4.8M13 9L8.7 4.8" fill="none" stroke="#dc9a36" stroke-width="0.8"/></svg>
<svg class="b" style="left:537.5px;top:114.5px" width="6" height="3.5" viewBox="0 0 6 3.5"><path d="M0 0H6L3 3.5Z" fill="#444"/></svg>
<div class="inp" style="left:556px;top:106px;width:89px;height:20px;border-color:#d5d5d5"></div>
<div class="t" style="left:-1358px;width:2000px;text-align:right;top:116.84px;font-size:12px;color:#444;">0</div>
<div class="btn" style="left:653px;top:105px;width:36px;height:21px;"></div>
<svg class="b" style="left:659px;top:108px" width="13" height="16" viewBox="0 0 13 16"><path d="M11.5 1.9H2L7 8.1L2 14.3H11.5" fill="none" stroke="#1f3a50" stroke-width="2" stroke-linejoin="miter"/></svg>
<svg class="b" style="left:677.5px;top:114.5px" width="6" height="3.5" viewBox="0 0 6 3.5"><path d="M0 0H6L3 3.5Z" fill="#444"/></svg>
<div class="btn" style="left:1312px;top:105px;width:47px;height:21px;"></div>
<div class="t" style="left:333px;width:2000px;text-align:center;top:116.02px;font-size:11.5px;color:#444;">Еще</div>
<svg class="b" style="left:1347.5px;top:114.5px" width="6" height="3.5" viewBox="0 0 6 3.5"><path d="M0 0H6L3 3.5Z" fill="#444"/></svg>
<div class="btn" style="left:1365px;top:105px;width:26px;height:21px;"></div>
<div class="t" style="left:378.5px;width:2000px;text-align:center;top:116.80px;font-size:15px;color:#111;">?</div>
<div class="b" style="left:12px;top:133px;width:1379px;height:600px;border:1px solid #a0a0a0;background:#fff"></div>
<div class="b" style="left:13px;top:134px;width:1377px;height:582px;overflow:hidden"><div class="b" style="left:-13px;top:-134px;width:1394px;height:728px"><div class="t" style="left:18.5px;top:162.76px;font-size:24.35px;font-weight:bold;color:#0a3329;">Мемориальный ордер 3</div>
<div class="b" style="left:12px;top:190px;width:1362px;height:1px;background:#a8a8a8"></div>
<div class="t" style="left:-51.299999999999955px;width:2000px;text-align:center;top:199.39px;font-size:11px;color:#333;">Приложение 76</div>
<div class="t" style="left:-51.299999999999955px;width:2000px;text-align:center;top:213.39px;font-size:11px;color:#333;">к приказу Министра финансов</div>
<div class="t" style="left:-51.299999999999955px;width:2000px;text-align:center;top:227.39px;font-size:11px;color:#333;">Республики Казахстан</div>
<div class="t" style="left:-51.299999999999955px;width:2000px;text-align:center;top:241.39px;font-size:11px;color:#333;">от 2 августа 2011 года № 390</div>
<div class="t" style="left:853px;top:285.92px;font-size:10.9px;color:#333;">Форма № 381</div>
<div class="b" style="left:741px;top:290px;width:36px;height:21px;background:#f4f4f4;border:1px solid #e4e4e4"></div>
<div class="t" style="left:15px;top:315.92px;font-size:11.2px;font-weight:bold;color:#222;">Государственное учреждение "Департамент по чрезвычайным ситуациям"</div>
<div class="b" style="left:12px;top:323px;width:536px;height:1px;background:#333"></div>
<div class="t" style="left:15px;top:330.43px;font-size:11.16px;color:#333;">Наименование государственного учреждения (централизованной бухгалтерии)</div>
<div class="t" style="left:-459.29999999999995px;width:2000px;text-align:center;top:359.88px;font-size:11.3px;font-weight:bold;color:#222;">Мемориальный ордер 3</div>
<div class="t" style="left:-459.29999999999995px;width:2000px;text-align:center;top:374.88px;font-size:11.3px;font-weight:bold;color:#222;">за 01.02.2024 - 25.02.2024</div>
<div class="t" style="left:34px;top:389.61px;font-size:11.24px;font-weight:bold;color:#222;">Накопительная ведомость по учету денежных средств на КСН платных услуг, КСН спонсорской, благотворительной помощи, КСН временного размещения денежных средств, КСН</div>
<div class="t" style="left:20px;top:403.61px;font-size:11.24px;font-weight:bold;color:#222;">местного самоуправления, КСН целевого финансирования, на счете в иностранной валюте и специальных счетах бюджетного инвестиционного проекта по внешним займам и грантам</div>
<div class="t" style="left:15px;top:463.14px;font-size:11.15px;color:#333;">Остаток на начало месяца</div>
<div class="b" style="left:12px;top:483px;width:145px;height:99px;background:#d8e4cc;border:1px solid #a3a3a3"></div>
<div class="b" style="left:156px;top:483px;width:127px;height:99px;background:#d8e4cc;border:1px solid #a3a3a3"></div>
<div class="b" style="left:282px;top:483px;width:289px;height:24.5px;background:#d8e4cc;border:1px solid #a3a3a3"></div>
<div class="b" style="left:282px;top:506.5px;width:145px;height:34.5px;background:#d8e4cc;border:1px solid #a3a3a3"></div>
<div class="b" style="left:426px;top:506.5px;width:145px;height:58.0px;background:#d8e4cc;border:1px solid #a3a3a3"></div>
<div class="b" style="left:282px;top:540px;width:145px;height:24.5px;background:#d8e4cc;border:1px solid #a3a3a3"></div>
<div class="b" style="left:12px;top:563.5px;width:145px;height:18.5px;background:#d8e4cc;border:1px solid #a3a3a3"></div>
<div class="b" style="left:156px;top:563.5px;width:127px;height:18.5px;background:#d8e4cc;border:1px solid #a3a3a3"></div>
<div class="b" style="left:282px;top:563.5px;width:145px;height:18.5px;background:#d8e4cc;border:1px solid #a3a3a3"></div>
<div class="b" style="left:426px;top:563.5px;width:145px;height:18.5px;background:#d8e4cc;border:1px solid #a3a3a3"></div>
<div class="b" style="left:12px;top:581px;width:145px;height:15.5px;background:#fff;border:1px solid #b5d0c5"></div>
<div class="b" style="left:156px;top:581px;width:127px;height:15.5px;background:#fff;border:1px solid #b5d0c5"></div>
<div class="b" style="left:282px;top:581px;width:145px;height:15.5px;background:#fff;border:1px solid #b5d0c5"></div>
<div class="b" style="left:426px;top:581px;width:145px;height:15.5px;background:#fff;border:1px solid #b5d0c5"></div>
<div class="b" style="left:12px;top:595.5px;width:271px;height:18.0px;background:#d8e4cc;border:1px solid #a3a3a3"></div>
<div class="b" style="left:282px;top:595.5px;width:145px;height:18.0px;background:#d8e4cc;border:1px solid #a3a3a3"></div>
<div class="b" style="left:426px;top:595.5px;width:145px;height:18.0px;background:#d8e4cc;border:1px solid #a3a3a3"></div>
<div class="t" style="left:-915.5px;width:2000px;text-align:center;top:524.70px;font-size:13px;font-weight:bold;color:#0c3c32;">№ п/п</div>
<div class="t" style="left:-783.0px;width:2000px;text-align:center;top:493.19px;font-size:13.3px;font-weight:bold;color:#0c3c32;">Дата выписки</div>
<div class="t" style="left:-783.0px;width:2000px;text-align:center;top:509.19px;font-size:13.3px;font-weight:bold;color:#0c3c32;">органов</div>
<div class="t" style="left:-783.0px;width:2000px;text-align:center;top:525.19px;font-size:13.3px;font-weight:bold;color:#0c3c32;">казначейства</div>
<div class="t" style="left:-783.0px;width:2000px;text-align:center;top:541.19px;font-size:13.3px;font-weight:bold;color:#0c3c32;">или отчета</div>
<div class="t" style="left:-783.0px;width:2000px;text-align:center;top:557.19px;font-size:13.3px;font-weight:bold;color:#0c3c32;">кассира</div>
<div class="t" style="left:-573.5px;width:2000px;text-align:center;top:495.36px;font-size:13.4px;font-weight:bold;color:#0c3c32;">в дебет счета/субсчета</div>
<div class="t" style="left:-645.5px;width:2000px;text-align:center;top:516.69px;font-size:13.3px;font-weight:bold;color:#0c3c32;">с кредита</div>
<div class="t" style="left:-645.5px;width:2000px;text-align:center;top:532.19px;font-size:13.3px;font-weight:bold;color:#0c3c32;">счетов/субсчетов</div>
<div class="t" style="left:-501.5px;width:2000px;text-align:center;top:538.19px;font-size:13.3px;font-weight:bold;color:#0c3c32;">итого</div>
<div class="t" style="left:-645.5px;width:2000px;text-align:center;top:553.43px;font-size:12.6px;font-weight:bold;color:#0c3c32;">6050</div>
<div class="t" style="left:-915.5px;width:2000px;text-align:center;top:574.30px;font-size:13px;font-weight:bold;color:#0c3c32;">1</div>
<div class="t" style="left:-783.0px;width:2000px;text-align:center;top:574.30px;font-size:13px;font-weight:bold;color:#0c3c32;">2</div>
<div class="t" style="left:-645.5px;width:2000px;text-align:center;top:574.30px;font-size:13px;font-weight:bold;color:#0c3c32;">3</div>
<div class="t" style="left:-501.5px;width:2000px;text-align:center;top:574.30px;font-size:13px;font-weight:bold;color:#0c3c32;">4</div>
<div class="t" style="left:-915.5px;width:2000px;text-align:center;top:588.79px;font-size:11px;color:#333;">1</div>
<div class="t" style="left:-780.5px;width:2000px;text-align:center;top:588.79px;font-size:11px;color:#333;">12.02.2024</div>
<div class="t" style="left:-1576.5px;width:2000px;text-align:right;top:588.82px;font-size:10.9px;color:#333;">250 000,00</div>
<div class="t" style="left:-1432.5px;width:2000px;text-align:right;top:588.82px;font-size:10.9px;color:#333;">250 000,00</div>
<div class="t" style="left:16.5px;top:604.15px;font-size:14px;color:#0c3c32;">Всего</div>
<div class="t" style="left:-1577.5px;width:2000px;text-align:right;top:605.26px;font-size:12.8px;font-weight:bold;color:#0c3c32;">250 000,00</div>
<div class="t" style="left:-1433.5px;width:2000px;text-align:right;top:605.26px;font-size:12.8px;font-weight:bold;color:#0c3c32;">250 000,00</div>
<div class="b" style="left:12px;top:669px;width:145px;height:81px;background:#d8e4cc;border:1px solid #a3a3a3"></div>
<div class="b" style="left:156px;top:669px;width:127px;height:81px;background:#d8e4cc;border:1px solid #a3a3a3"></div>
<div class="b" style="left:282px;top:669px;width:434px;height:27px;background:#d8e4cc;border:1px solid #a3a3a3"></div>
<div class="b" style="left:282px;top:695px;width:289px;height:28px;background:#d8e4cc;border:1px solid #a3a3a3"></div>
<div class="b" style="left:570px;top:695px;width:146px;height:28px;background:#d8e4cc;border:1px solid #a3a3a3"></div>
<div class="b" style="left:282px;top:722px;width:145px;height:28px;background:#d8e4cc;border:1px solid #a3a3a3"></div>
<div class="b" style="left:426px;top:722px;width:145px;height:28px;background:#d8e4cc;border:1px solid #a3a3a3"></div>
<div class="b" style="left:570px;top:722px;width:146px;height:28px;background:#d8e4cc;border:1px solid #a3a3a3"></div>
<div class="t" style="left:-915.5px;width:2000px;text-align:center;top:711.30px;font-size:13px;font-weight:bold;color:#0c3c32;">№ п/п</div>
<div class="t" style="left:-783.0px;width:2000px;text-align:center;top:679.69px;font-size:13.3px;font-weight:bold;color:#0c3c32;">Дата выписки</div>
<div class="t" style="left:-783.0px;width:2000px;text-align:center;top:695.69px;font-size:13.3px;font-weight:bold;color:#0c3c32;">органов</div>
<div class="t" style="left:-783.0px;width:2000px;text-align:center;top:711.69px;font-size:13.3px;font-weight:bold;color:#0c3c32;">казначейства</div>
<div class="t" style="left:-783.0px;width:2000px;text-align:center;top:727.69px;font-size:13.3px;font-weight:bold;color:#0c3c32;">или отчета</div>
<div class="t" style="left:-501.0px;width:2000px;text-align:center;top:683.16px;font-size:13.4px;font-weight:bold;color:#0c3c32;">в кредит счета/субсчета</div>
<div class="t" style="left:-573.5px;width:2000px;text-align:center;top:710.69px;font-size:13.3px;font-weight:bold;color:#0c3c32;">с дебета счетов/субсчетов</div>
<div class="b" style="left:13px;top:626px;width:1363px;height:1px;background:repeating-linear-gradient(90deg,#222 0 6px,transparent 6px 8px)"></div>
<div class="t" style="left:806px;top:648.85px;font-size:11.1px;color:#333;font-style:italic">Оборотная сторона ф. № 381</div>
</div></div>
<svg class="b" style="left:1380px;top:143px" width="7" height="4" viewBox="0 0 7 4"><path d="M0 4L3.5 0L7 4Z" fill="#c8c8c8"/></svg>
<div class="b" style="left:1379px;top:157px;width:8px;height:535px;background:#d6d6d6;border-radius:4px"></div>
<svg class="b" style="left:1380px;top:701px" width="7" height="4" viewBox="0 0 7 4"><path d="M0 0L3.5 4L7 0Z" fill="#555"/></svg>
<div class="b" style="left:36px;top:719px;width:1316px;height:8px;background:#d6d6d6;border-radius:4px"></div>
<svg class="b" style="left:1362px;top:719px" width="4" height="7" viewBox="0 0 4 7"><path d="M0 0L4 3.5L0 7Z" fill="#555"/></svg>
<div class="b" style="left:1379px;top:157px;width:8px;height:350px;background:#9a9a9a;border-radius:4px"></div>
<svg class="b" style="left:22px;top:719px" width="4" height="7" viewBox="0 0 4 7"><path d="M4 0L0 3.5L4 7Z" fill="#c8c8c8"/></svg>
<div class="b" style="left:36px;top:719px;width:1223px;height:8px;background:#9a9a9a;border-radius:4px"></div>
</div></div>
<div class="b" style="left:725px;top:260px;width:976px;height:2px;background:linear-gradient(#f6eaa6 50%,#ecdb86 50%)"></div>
</body></html>
